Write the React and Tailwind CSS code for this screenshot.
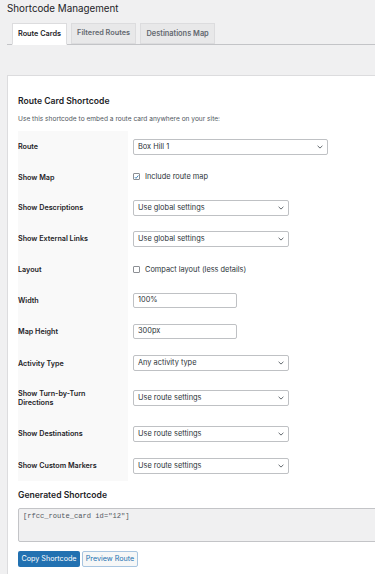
import React from "react";

const font = { fontFamily: "Inter, 'Liberation Sans', sans-serif" };

function Chevron() {
  return (
    <svg width="6" height="4" viewBox="0 0 6 4" className="shrink-0">
      <path d="M0.6 0.8 L3 3.1 L5.4 0.8" fill="none" stroke="#50575e" strokeWidth="0.9" />
    </svg>
  );
}

function Select({ value, wide }) {
  return (
    <div
      className={`${wide ? "w-[195px]" : "w-[156px]"} h-[16px] bg-white border border-[#bfc1c4] rounded-[2px] flex items-center justify-between pl-[4px] pr-[4px] text-[7.4px] text-[#2c3338]`}
    >
      <span>{value}</span>
      <Chevron />
    </div>
  );
}

function Input({ value }) {
  return (
    <div className="w-[104px] h-[15px] bg-white border border-[#bfc1c4] rounded-[2px] flex items-center pl-[4px] text-[7.4px] text-[#2c3338]">
      {value}
    </div>
  );
}

function Check({ checked, label }) {
  return (
    <div className="flex items-center gap-[5px] text-[7.4px] text-[#2c3338]">
      <div className="w-[7px] h-[7px] border border-[#8c8f94] rounded-[1px] bg-white flex items-center justify-center">
        {checked && (
          <svg width="6" height="6" viewBox="0 0 6 6">
            <path d="M1 3.2 L2.4 4.6 L5.2 1.2" fill="none" stroke="#2271b1" strokeWidth="1" />
          </svg>
        )}
      </div>
      <span>{label}</span>
    </div>
  );
}

const rows = [
  { label: "Route", h: "h-[31px]", control: <Select value="Box Hill 1" wide /> },
  { label: "Show Map", h: "h-[30px]", control: <Check checked label="Include route map" /> },
  { label: "Show Descriptions", h: "h-[31px]", control: <Select value="Use global settings" /> },
  { label: "Show External Links", h: "h-[31px]", control: <Select value="Use global settings" /> },
  { label: "Layout", h: "h-[31px]", control: <Check label="Compact layout (less details)" /> },
  { label: "Width", h: "h-[30px]", control: <Input value="100%" /> },
  { label: "Map Height", h: "h-[32px]", control: <Input value="300px" /> },
  { label: "Activity Type", h: "h-[32px]", control: <Select value="Any activity type" /> },
  { label: "Show Turn-by-Turn Directions", h: "h-[38px]", control: <Select value="Use route settings" /> },
  { label: "Show Destinations", h: "h-[33px]", control: <Select value="Use route settings" /> },
  { label: "Show Custom Markers", h: "h-[31px]", control: <Select value="Use route settings" /> },
];

export default function App() {
  return (
    <div className="w-[375px] h-[574px] overflow-hidden bg-[#f0f0f1]" style={font}>
      <div className="pl-[7px] pt-[2px] text-[9.8px] leading-[14px] text-[#1d2327]">Shortcode Management</div>
      <div className="ml-[7px] mt-[7px] pl-[5px] flex gap-[4px] border-b border-[#c3c4c7] w-[400px]">
        <div className="h-[22px] -mb-px px-[5px] flex items-center bg-white border border-[#dcdcde] border-b-white text-[7.3px] font-semibold text-[#1d2327]">
          Route Cards
        </div>
        <div className="h-[21px] px-[5px] flex items-center bg-[#e8e8e9] border border-[#dcdcde] text-[7.3px] font-semibold text-[#646970]">
          Filtered Routes
        </div>
        <div className="h-[21px] px-[5.5px] flex items-center bg-[#e8e8e9] border border-[#dcdcde] text-[7.4px] font-semibold text-[#646970]">
          Destinations Map
        </div>
      </div>
      <div className="ml-[7px] mt-[30px] w-[420px] h-[520px] bg-white border border-[#dcdcde] pl-[10px] pt-[19px]">
        <div className="text-[8.6px] leading-[12px] font-semibold text-[#1d2327]">Route Card Shortcode</div>
        <div className="mt-[7px] text-[6.6px] leading-[10px] text-[#50575e]">
          Use this shortcode to embed a route card anywhere on your site:
        </div>
        <div className="mt-[7px] flex flex-col">
          {rows.map((r) => (
            <div key={r.label} className={`flex ${r.h}`}>
              <div className="w-[110px] bg-[#f9f9f9] flex items-center text-[7.2px] leading-[9px] font-semibold text-[#1d2327] pr-[20px]">
                {r.label}
              </div>
              <div className="ml-[5px] flex items-center">{r.control}</div>
            </div>
          ))}
        </div>
        <div className="mt-[8px] text-[8.6px] leading-[12px] font-semibold text-[#1d2327]">Generated Shortcode</div>
        <div className="mt-[7px] w-[390px] h-[34px] bg-[#f0f0f1] border border-[#c3c4c7] rounded-[2px] pl-[4px] pt-[2px] text-[7.1px] leading-[10px] text-[#50575e]" style={{ fontFamily: "'Liberation Mono', 'DejaVu Sans Mono', monospace" }}>
          [rfcc_route_card id="12"]
        </div>
        <div className="mt-[9px] flex gap-[2px]">
          <div className="w-[62px] h-[16px] bg-[#2271b1] rounded-[2px] flex items-center justify-center text-[7.2px] text-white">
            Copy Shortcode
          </div>
          <div className="w-[56px] h-[16px] bg-[#f6f7f7] border border-[#a8c5e0] rounded-[2px] flex items-center justify-center text-[7.2px] text-[#2271b1]">
            Preview Route
          </div>
        </div>
      </div>
    </div>
  );
}
